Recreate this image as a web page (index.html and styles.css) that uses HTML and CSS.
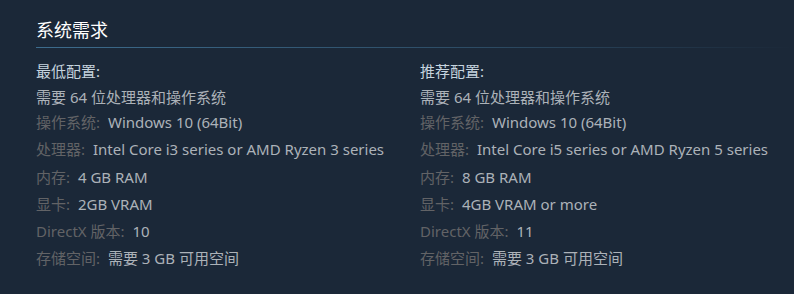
FILE: index.html
```html
<!DOCTYPE html>
<html lang="zh-CN">
<head>
<meta charset="utf-8">
<link rel="stylesheet" href="styles.css">
</head>
<body>
<div class="page">
  <h2 class="title">系统需求</h2>
  <div class="req">
    <div class="col">
      <div class="head">最低配置:</div>
      <ul class="list">
        <li class="first">需要 64 位处理器和操作系统</li>
        <li class="plain"><span class="lbl">操作系统:</span> Windows 10 (64Bit)</li>
        <li><span class="lbl">处理器:</span> Intel Core i3 series or AMD Ryzen 3 series</li>
        <li><span class="lbl">内存:</span> 4 GB RAM</li>
        <li><span class="lbl">显卡:</span> 2GB VRAM</li>
        <li><span class="lbl">DirectX 版本:</span> 10</li>
        <li><span class="lbl">存储空间:</span> 需要 3 GB 可用空间</li>
      </ul>
    </div>
    <div class="col">
      <div class="head">推荐配置:</div>
      <ul class="list">
        <li class="first">需要 64 位处理器和操作系统</li>
        <li class="plain"><span class="lbl">操作系统:</span> Windows 10 (64Bit)</li>
        <li><span class="lbl">处理器:</span> Intel Core i5 series or AMD Ryzen 5 series</li>
        <li><span class="lbl">内存:</span> 8 GB RAM</li>
        <li><span class="lbl">显卡:</span> 4GB VRAM or more</li>
        <li><span class="lbl">DirectX 版本:</span> 11</li>
        <li><span class="lbl">存储空间:</span> 需要 3 GB 可用空间</li>
      </ul>
    </div>
  </div>
</div>
</body>
</html>
```
FILE: styles.css
```css
html, body {
  margin: 0;
  padding: 0;
  background: #1b2838;
}
body {
  width: 794px;
  height: 294px;
  overflow: hidden;
  font-family: "Noto Sans", "Noto Sans CJK SC", sans-serif;
}
.page {
  padding: 18px 0 0 36px;
}
.title {
  margin: 0;
  font-size: 18px;
  font-weight: normal;
  line-height: 24px;
  color: #ffffff;
  padding-bottom: 6px;
  background-image: linear-gradient(to right, #3d6c8d 0%, rgba(61,108,141,0.5) 60%, rgba(61,108,141,0) 100%);
  background-size: 100% 1px;
  background-repeat: no-repeat;
  background-position: bottom left;
}
.req {
  display: grid;
  grid-template-columns: 384px 1fr;
  padding-top: 13px;
}
.head {
  font-size: 15px;
  line-height: 20px;
  color: #c6d4df;
}
.list {
  list-style: none;
  margin: 0;
  padding: 0;
}
.list li {
  font-size: 15px;
  line-height: 20px;
  color: #acb2b8;
  margin-top: 7.3px;
}
.list li.first {
  margin-top: 6px;
}
.list li.plain {
  margin-top: 5px;
}
.lbl {
  color: #626366;
  margin-right: 4px;
}
```
